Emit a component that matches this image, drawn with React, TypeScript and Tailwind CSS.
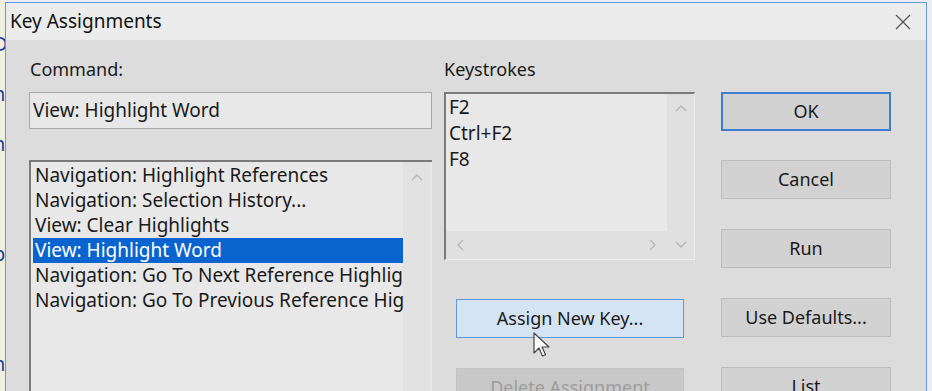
import React from "react";

const font = { fontFamily: '"Noto Sans", "Open Sans", sans-serif' };

function Btn({ label, primary, disabled }: { label: string; primary?: boolean; disabled?: boolean }) {
  let cls = "h-[39px] w-full flex items-center justify-center text-[18px] ";
  if (primary) cls += "border-2 border-[#3c7fd0] bg-[#d2d2d2] text-[#1a1a1a]";
  else if (disabled) cls += "border border-[#c2c2c2] bg-[#c8c8c8] text-[#9c9c9c]";
  else cls += "border border-[#bdbdbd] bg-[#d2d2d2] text-[#1a1a1a]";
  return <div className={cls}>{label}</div>;
}

function Up() {
  return (
    <svg width="12" height="8" viewBox="0 0 12 8" className="text-[#b4b4b4]">
      <path d="M1 7 L6 2 L11 7" fill="none" stroke="currentColor" strokeWidth="1.3" />
    </svg>
  );
}
function Down() {
  return (
    <svg width="12" height="8" viewBox="0 0 12 8" className="text-[#b4b4b4]">
      <path d="M1 1 L6 6 L11 1" fill="none" stroke="currentColor" strokeWidth="1.3" />
    </svg>
  );
}
function Left() {
  return (
    <svg width="8" height="12" viewBox="0 0 8 12" className="text-[#b4b4b4]">
      <path d="M7 1 L2 6 L7 11" fill="none" stroke="currentColor" strokeWidth="1.3" />
    </svg>
  );
}
function Right() {
  return (
    <svg width="8" height="12" viewBox="0 0 8 12" className="text-[#b4b4b4]">
      <path d="M1 1 L6 6 L1 11" fill="none" stroke="currentColor" strokeWidth="1.3" />
    </svg>
  );
}

export default function App() {
  const commands = [
    "Navigation: Highlight References",
    "Navigation: Selection History...",
    "View: Clear Highlights",
    "View: Highlight Word",
    "Navigation: Go To Next Reference Highlight",
    "Navigation: Go To Previous Reference Highlight",
  ];
  return (
    <div className="w-[932px] h-[391px] overflow-hidden relative flex items-start bg-[#e9eef5]" style={font}>
      {/* background strip at left */}
      <div className="w-[5px] h-[391px] shrink-0 overflow-hidden bg-[#eef0e0] flex flex-col text-[#1f3fa0] text-[20px] leading-none pt-[34px] gap-[30px]">
        <span className="-ml-[7px]">D</span>
        <span className="-ml-[7px]">n</span>
        <span className="-ml-[7px]">n</span>
        <span className="-ml-[7px] mt-[60px]">p</span>
        <span className="-ml-[7px] mt-[60px]">n</span>
        <span className="-ml-[7px] mt-[40px]">r</span>
      </div>
      {/* dialog */}
      <div className="w-[922px] h-[420px] shrink-0 mt-[2px] border border-[#6a9ad6] bg-[#dcdcdc] flex flex-col text-[#1a1a1a]">
        <div className="h-[37px] shrink-0 bg-[#ececec] flex items-center justify-between pl-[4px] pr-[15px]">
          <span className="text-[19px] text-[#111]">Key Assignments</span>
          <svg width="16" height="16" viewBox="0 0 16 16" className="text-[#555]">
            <path d="M1 1 L15 15 M15 1 L1 15" stroke="currentColor" strokeWidth="1.2" />
          </svg>
        </div>
        <div className="flex shrink-0 pl-[23px] pt-[17px]">
          {/* column 1 */}
          <div className="w-[403px] flex flex-col">
            <div className="h-[24px] text-[18px] leading-[24px] pl-[1px]">Command:</div>
            <div className="mt-[11px] h-[37px] border border-[#a8a8a8] bg-[#e8e8e8] flex items-center pl-[3px] text-[19px]">
              View: Highlight Word
            </div>
            <div className="mt-[31px] h-[240px] border-t-2 border-l-2 border-[#7a7a7a] bg-[#e8e8e8] flex">
              <div className="w-[372px] pt-[1px] pl-[2px] overflow-hidden">
                {commands.map((c, i) => (
                  <div
                    key={c}
                    className={
                      "h-[25px] leading-[25px] text-[19px] whitespace-nowrap pl-[2px] " +
                      (i === 3 ? "bg-[#0a64cf] text-white" : "")
                    }
                  >
                    {c}
                  </div>
                ))}
              </div>
              <div className="w-[27px] bg-[#e2e2e2] flex justify-center pt-[11px]">
                <Up />
              </div>
            </div>
          </div>
          {/* column 2 */}
          <div className="w-[251px] ml-[12px] flex flex-col">
            <div className="h-[24px] text-[18px] leading-[24px]">Keystrokes</div>
            <div className="mt-[11px] h-[168px] border-t-2 border-l-2 border-[#7a7a7a] border-r border-b border-r-[#ececec] border-b-[#ececec] bg-[#e8e8e8] flex">
              <div className="flex-1 flex flex-col">
                <div className="flex-1 pl-[3px]">
                  {["F2", "Ctrl+F2", "F8"].map((k) => (
                    <div key={k} className="h-[26px] leading-[26px] text-[19px]">
                      {k}
                    </div>
                  ))}
                </div>
                <div className="h-[28px] bg-[#e0e0e0] flex items-center justify-between px-[10px]">
                  <Left />
                  <Right />
                </div>
              </div>
              <div className="w-[27px] bg-[#e0e0e0] flex flex-col items-center justify-between pt-[10px] pb-[10px]">
                <Up />
                <Down />
              </div>
            </div>
            <div className="mt-[39px] ml-[12px] w-[228px] flex flex-col">
              <div className="h-[39px] w-full flex items-center justify-center text-[18px] border border-[#5c9ad8] bg-[#d4e4f2] text-[#1a1a1a]">
                Assign New Key...
              </div>
              <div className="mt-[30px]">
                <Btn label="Delete Assignment" disabled />
              </div>
            </div>
          </div>
          {/* column 3 */}
          <div className="w-[170px] ml-[26px] pt-[35px] flex flex-col gap-[30px]">
            <div className="-mb-[1px]">
              <Btn label="OK" primary />
            </div>
            <Btn label="Cancel" />
            <Btn label="Run" />
            <Btn label="Use Defaults..." />
            <Btn label="List" />
          </div>
        </div>
      </div>
      <div className="flex-1 h-[391px] bg-[#e9eef5]" />
      {/* mouse cursor */}
      <svg className="absolute left-[533px] top-[332px]" width="20" height="28" viewBox="0 0 20 28">
        <path d="M1 1 L1 21 L6 16 L9.5 24 L12.5 22.8 L9 15 L16 15 Z" fill="#fff" stroke="#444" strokeWidth="1.2" strokeLinejoin="round" />
      </svg>
    </div>
  );
}
